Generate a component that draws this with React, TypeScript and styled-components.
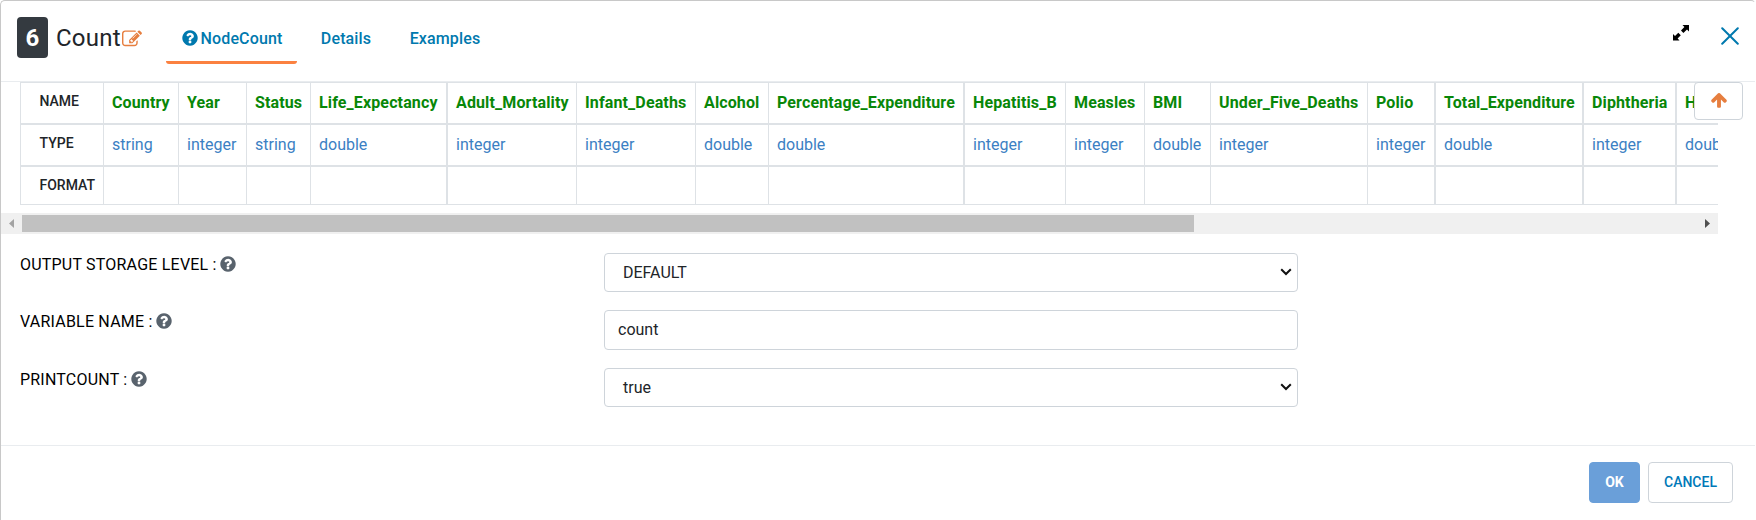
import React from "react";
import styled, { createGlobalStyle, css } from "styled-components";

const GlobalStyle = createGlobalStyle`
  * { box-sizing: border-box; }
  body {
    margin: 0;
    background: #fff;
    font-family: Roboto, "Liberation Sans", sans-serif;
    font-size: 16px;
    color: #212529;
  }
`;

const Dialog = styled.section`
  width: 1756px;
  height: 520px;
  display: flex;
  flex-direction: column;
  background: #fff;
  border: 1px solid #c8c8c8;
  border-right-color: #fff;
  border-bottom: 0;
  border-radius: 5px 5px 0 0;
  overflow: hidden;
`;

const Header = styled.header`
  height: 81px;
  flex: none;
  display: flex;
  align-items: flex-start;
  border-bottom: 1px solid #e9ecef;
  padding: 16px 16px 0 16px;
`;

const NodeBadge = styled.span`
  width: 31px;
  height: 41px;
  display: flex;
  align-items: center;
  justify-content: center;
  border-radius: 4px;
  background: #343a40;
  color: #fff;
  font-size: 24px;
  font-weight: 700;
`;

const Title = styled.h1`
  margin: 5px 0 0 8px;
  font-size: 24px;
  font-weight: 400;
  line-height: 32px;
  letter-spacing: 0.25px;
  width: 66px;
  white-space: nowrap;
`;

const Icon = styled.svg<{ $size: number }>`
  width: ${(p) => p.$size}px;
  height: ${(p) => p.$size}px;
  flex: none;
  display: block;
  fill: currentColor;
`;

const EditButton = styled.span`
  margin: 12px 0 0 0;
  color: #e67e3f;
`;

const Tabs = styled.nav`
  display: flex;
  margin-left: 24px;
`;

const Tab = styled.a<{ $active?: boolean; $width: number }>`
  width: ${(p) => p.$width}px;
  height: 47px;
  display: flex;
  align-items: center;
  justify-content: center;
  gap: 2px;
  padding-bottom: 2px;
  border-bottom: 3px solid ${(p) => (p.$active ? "#fb8140" : "transparent")};
  border-radius: 3px;
  color: #0079ae;
  font-size: 16px;
  font-weight: 500;
  letter-spacing: 0.13px;
`;

const Actions = styled.div`
  margin-left: auto;
  display: flex;
  align-items: flex-start;
`;

const ExpandIcon = styled.svg`
  width: 16px;
  height: 16px;
  margin: 8px 32px 0 0;
  display: block;
`;

const CloseIcon = styled.svg`
  width: 18px;
  height: 18px;
  margin-top: 10px;
  display: block;
`;

const Body = styled.main`
  height: 363px;
  flex: none;
  display: flex;
  flex-direction: column;
  position: relative;
`;

const SchemaViewport = styled.div`
  width: 1717px;
  padding-left: 19px;
  overflow: hidden;
  flex: none;
`;

const SchemaGrid = styled.div`
  display: grid;
  width: 1810px;
  grid-template-columns: 83px 75px 68px 64px 136px 130px 119px 73px 195px 102px 79px 66px 157px 67px 148px 93px 135px;
  grid-template-rows: 42px 42px 37px;
  border-top: 1px solid #dee2e6;
  border-bottom: 1px solid #dee2e6;
  height: 123px;
`;

const cell = css<{ $thick?: boolean; $last?: boolean }>`
  border-left: ${(p) => (p.$thick ? 2 : 1)}px solid #dee2e6;
  border-bottom: ${(p) => (p.$last ? 0 : 2)}px solid #dee2e6;
  white-space: nowrap;
  overflow: hidden;
  line-height: 24px;
`;

const RowHead = styled.div<{ $thick?: boolean; $last?: boolean }>`
  ${cell}
  padding: 6px 0 0 18.500px;
  font-size: 14px;
  font-weight: 500;
`;

const NameCell = styled.div<{ $thick?: boolean; $last?: boolean }>`
  ${cell}
  padding: 8px 0 0 8px;
  color: #088708;
  font-weight: 700;
  letter-spacing: 0.13px;
`;

const TypeCell = styled.div<{ $thick?: boolean; $last?: boolean }>`
  ${cell}
  padding: 8px 0 0 8px;
  color: #3b80c3;
`;

const FormatCell = styled.div<{ $thick?: boolean; $last?: boolean }>`
  ${cell}
`;

const ScrollTrack = styled.div`
  width: 1717px;
  height: 21px;
  margin-top: 8px;
  flex: none;
  display: flex;
  align-items: center;
  background: #f0f0f0;
`;

const ScrollArrow = styled.svg`
  width: 21px;
  height: 21px;
  display: block;
`;

const ScrollThumb = styled.div`
  width: 1172px;
  height: 17px;
  margin-right: auto;
  background: #c1c1c1;
`;

const TopButton = styled.button`
  position: absolute;
  top: 0;
  left: 1693px;
  width: 49px;
  height: 38px;
  padding: 0 0 2px;
  display: flex;
  align-items: center;
  justify-content: center;
  border: 1px solid #ced4da;
  border-radius: 4px;
  background: #fff;
  color: #e67e3f;
`;

const Form = styled.form`
  display: flex;
  flex-direction: column;
  gap: 18px;
  margin-top: 19px;
`;

const FormRow = styled.div`
  display: grid;
  grid-template-columns: 584px 694px;
  padding-left: 19px;
`;

const Label = styled.label`
  display: flex;
  align-items: center;
  gap: 2.500px;
  height: 22px;
  color: #000;
  white-space: pre;
  letter-spacing: 0.21px;
`;

const HelpMark = styled.span`
  color: #59636d;
`;

const Control = styled.div<{ $height: number; $indent: number }>`
  height: ${(p) => p.$height}px;
  display: flex;
  align-items: center;
  justify-content: space-between;
  padding: 0 5px 1px ${(p) => p.$indent}px;
  border: 1px solid #ced4da;
  border-radius: 4px;
  color: #212529;
`;

const Chevron = styled.svg`
  width: 12px;
  height: 8px;
  display: block;
`;

const Footer = styled.footer`
  flex: 1;
  display: flex;
  align-items: flex-start;
  justify-content: flex-end;
  gap: 8px;
  padding: 16px 22px 0 0;
  border-top: 1px solid #e9ecef;
`;

const Button = styled.button<{ $primary?: boolean }>`
  width: ${(p) => (p.$primary ? 51 : 85)}px;
  height: 41px;
  padding: 0 0 1px;
  border: 1px solid ${(p) => (p.$primary ? "#6a9fd9" : "#ced4da")};
  border-radius: 4px;
  background: ${(p) => (p.$primary ? "#6a9fd9" : "#fff")};
  color: ${(p) => (p.$primary ? "#fff" : "#0079b8")};
  font-family: inherit;
  font-size: 14px;
  font-weight: ${(p) => (p.$primary ? 700 : 500)};
`;

const QUESTION =
  "M1024 1376v-192q0-14-9-23t-23-9h-192q-14 0-23 9t-9 23v192q0 14 9 23t23 9h192q14 0 23-9t9-23zm256-672q0-88-55.5-163t-138.5-116-170-41q-243 0-371 213-15 24 8 42l132 100q7 6 19 6 16 0 25-12 53-68 86-92 34-24 86-24 48 0 85.5 26t37.5 59q0 38-20 61t-68 45q-63 28-115.5 86.5t-52.5 125.5v36q0 14 9 23t23 9h192q14 0 23-9t9-23q0-19 21.5-49.5t54.5-49.5q32-18 49-28.5t46-35 44.5-48 28-60.5 12.5-81zm384 192q0 209-103 385.5t-279.5 279.5-385.5 103-385.5-103-279.5-279.5-103-385.5 103-385.5 279.5-279.5 385.5-103 385.5 103 279.5 279.5 103 385.5z";
const EDIT =
  "M888 1184l116-116-152-152-116 116v56h96v96h56zm440-720q-16-16-33 1l-350 350q-17 17-1 33t33-1l350-350q17-17 1-33zm80 594v190q0 119-84.5 203.5t-203.5 84.5h-832q-119 0-203.5-84.5t-84.5-203.5v-832q0-119 84.5-203.5t203.5-84.5h832q63 0 117 25 15 7 18 23 3 17-9 29l-49 49q-14 14-32 8-23-6-45-6h-832q-66 0-113 47t-47 113v832q0 66 47 113t113 47h832q66 0 113-47t47-113v-126q0-13 9-22l64-64q15-15 35-7t20 29zm-96-738l288 288-672 672h-288v-288zm444 132l-92 92-288-288 92-92q28-28 68-28t68 28l152 152q28 28 28 68t-28 68z";
const ARROW_UP =
  "M1675 971q0 51-37 90l-75 75q-38 38-91 38-54 0-90-38l-294-293v704q0 52-37.5 84.5t-90.5 32.5h-128q-53 0-90.5-32.5t-37.5-84.5v-704l-294 293q-36 38-90 38t-90-38l-75-75q-38-38-38-90 0-53 38-91l651-651q35-37 90-37 54 0 91 37l651 651q37 39 37 91z";

const columns: { name: string; type: string; thick?: boolean }[] = [
  { name: "Country", type: "string" },
  { name: "Year", type: "integer" },
  { name: "Status", type: "string" },
  { name: "Life_Expectancy", type: "double" },
  { name: "Adult_Mortality", type: "integer", thick: true },
  { name: "Infant_Deaths", type: "integer" },
  { name: "Alcohol", type: "double" },
  { name: "Percentage_Expenditure", type: "double" },
  { name: "Hepatitis_B", type: "integer", thick: true },
  { name: "Measles", type: "integer" },
  { name: "BMI", type: "double" },
  { name: "Under_Five_Deaths", type: "integer" },
  { name: "Polio", type: "integer" },
  { name: "Total_Expenditure", type: "double", thick: true },
  { name: "Diphtheria", type: "integer", thick: true },
  { name: "H", type: "double", thick: true },
];

const fields = [
  { label: "OUTPUT STORAGE LEVEL :", value: "DEFAULT", select: true },
  { label: "VARIABLE NAME :", value: "count", select: false },
  { label: "PRINTCOUNT :", value: "true", select: true },
];

export default function App() {
  return (
    <>
      <GlobalStyle />
      <Dialog>
        <Header>
          <NodeBadge>6</NodeBadge>
          <Title>Count</Title>
          <EditButton>
            <Icon $size={20} viewBox="0 0 1792 1792"><path d={EDIT} /></Icon>
          </EditButton>
          <Tabs>
            <Tab $active $width={131}>
              <Icon $size={18} viewBox="0 0 1792 1792"><path d={QUESTION} /></Icon>
              NodeCount
            </Tab>
            <Tab $width={98}>Details</Tab>
            <Tab $width={100}>Examples</Tab>
          </Tabs>
          <Actions>
            <ExpandIcon viewBox="0 0 16 16">
              <path d="M9.500 0H16v6.500L14 4.600 10.400 8 8 5.600 11.400 2zM0 9l2 2 3.300-3.300L7.800 10.200 4.600 13.600 6.500 15.500H0z" />
            </ExpandIcon>
            <CloseIcon viewBox="0 0 18 18">
              <path d="M1.200 1.200l15.600 15.600M16.800 1.200L1.200 16.800" stroke="#0079ae" strokeWidth="2" strokeLinecap="round" fill="none" />
            </CloseIcon>
          </Actions>
        </Header>
        <Body>
          <SchemaViewport>
            <SchemaGrid>
              <RowHead>NAME</RowHead>
              {columns.map((c) => <NameCell key={c.name} $thick={c.thick}>{c.name}</NameCell>)}
              <RowHead>TYPE</RowHead>
              {columns.map((c) => <TypeCell key={c.name} $thick={c.thick}>{c.type}</TypeCell>)}
              <RowHead $last>FORMAT</RowHead>
              {columns.map((c) => <FormatCell key={c.name} $thick={c.thick} $last />)}
            </SchemaGrid>
          </SchemaViewport>
          <ScrollTrack>
            <ScrollArrow viewBox="0 0 21 21"><path d="M13 6v9L8 10.500z" fill="#a3a3a3" /></ScrollArrow>
            <ScrollThumb />
            <ScrollArrow viewBox="0 0 21 21"><path d="M8 6v9l5-4.500z" fill="#505050" /></ScrollArrow>
          </ScrollTrack>
          <Form>
            {fields.map((f) => (
              <FormRow key={f.label}>
                <Label>
                  {f.label}
                  <HelpMark>
                    <Icon $size={18} viewBox="0 0 1792 1792"><path d={QUESTION} /></Icon>
                  </HelpMark>
                </Label>
                <Control $height={f.select ? 39 : 40} $indent={f.select ? 18 : 13}>
                  {f.value}
                  {f.select && (
                    <Chevron viewBox="0 0 12 8">
                      <path d="M1.200 1.200L6 6l4.800-4.800" stroke="#111" strokeWidth="2" fill="none" />
                    </Chevron>
                  )}
                </Control>
              </FormRow>
            ))}
          </Form>
          <TopButton type="button">
            <Icon $size={18} viewBox="0 0 1792 1792"><path d={ARROW_UP} /></Icon>
          </TopButton>
        </Body>
        <Footer>
          <Button $primary>OK</Button>
          <Button>CANCEL</Button>
        </Footer>
      </Dialog>
    </>
  );
}
